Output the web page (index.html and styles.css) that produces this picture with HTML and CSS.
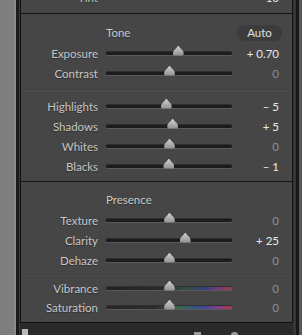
FILE: index.html
```html
<!DOCTYPE html>
<html lang="en">
<head>
    <meta charset="UTF-8">
    <meta name="viewport" content="width=device-width, initial-scale=1.0">
    <title>Basic - Tone / Presence</title>
    <link rel="stylesheet" href="styles.css">
</head>
<body>

<div class="app">
    <div class="left-strip"></div>
    <div class="column">
        <div class="frame">
            <div class="panel">
                <div class="panel-inner">

                    <div class="section top">
                        <div class="row">
                            <span class="label">Tint</span>
                            <div class="track"><div class="thumb" style="left: 46.7%"></div></div>
                            <span class="value">– 10</span>
                        </div>
                    </div>

                    <div class="section tone">
                        <div class="row head">
                            <span class="label"></span>
                            <span class="title">Tone</span>
                            <span class="auto">Auto</span>
                        </div>
                        <div class="row">
                            <span class="label">Exposure</span>
                            <div class="track"><div class="thumb" style="left: 57%"></div></div>
                            <span class="value">+ 0.70</span>
                        </div>
                        <div class="row">
                            <span class="label">Contrast</span>
                            <div class="track"><div class="thumb" style="left: 50%"></div></div>
                            <span class="value zero">0</span>
                        </div>
                        <div class="divider"></div>
                        <div class="row">
                            <span class="label">Highlights</span>
                            <div class="track"><div class="thumb" style="left: 47.5%"></div></div>
                            <span class="value">– 5</span>
                        </div>
                        <div class="row">
                            <span class="label">Shadows</span>
                            <div class="track"><div class="thumb" style="left: 52.5%"></div></div>
                            <span class="value">+ 5</span>
                        </div>
                        <div class="row">
                            <span class="label">Whites</span>
                            <div class="track"><div class="thumb" style="left: 50%"></div></div>
                            <span class="value zero">0</span>
                        </div>
                        <div class="row">
                            <span class="label">Blacks</span>
                            <div class="track"><div class="thumb" style="left: 49.5%"></div></div>
                            <span class="value">– 1</span>
                        </div>
                    </div>

                    <div class="section presence">
                        <div class="row head">
                            <span class="label"></span>
                            <span class="title">Presence</span>
                            <span></span>
                        </div>
                        <div class="row">
                            <span class="label">Texture</span>
                            <div class="track"><div class="thumb" style="left: 50%"></div></div>
                            <span class="value zero">0</span>
                        </div>
                        <div class="row">
                            <span class="label">Clarity</span>
                            <div class="track"><div class="thumb" style="left: 62.5%"></div></div>
                            <span class="value">+ 25</span>
                        </div>
                        <div class="row">
                            <span class="label">Dehaze</span>
                            <div class="track"><div class="thumb" style="left: 50%"></div></div>
                            <span class="value zero">0</span>
                        </div>
                        <div class="divider small"></div>
                        <div class="row">
                            <span class="label">Vibrance</span>
                            <div class="track color"><div class="thumb" style="left: 50%"></div></div>
                            <span class="value zero">0</span>
                        </div>
                        <div class="row tight">
                            <span class="label">Saturation</span>
                            <div class="track color sat"><div class="thumb" style="left: 50%"></div></div>
                            <span class="value zero">0</span>
                        </div>
                    </div>

                </div>
            </div>
            <div class="footer">
                <span class="square"></span>
                <span class="mark one"></span>
                <span class="mark two"></span>
            </div>
        </div>
    </div>
    <div class="right-strip"></div>
</div>

</body>
</html>
```

FILE: styles.css
```css
body {
    margin: 0;
    background-color: #2b2b2b;
    font-family: Lato, "Open Sans", sans-serif;
    font-size: 11.5px;
}
.app {
    display: flex;
    height: 335px;
    overflow: hidden;
}
.left-strip {
    width: 14px;
    background-color: #7e7e7e;
    border-right: 2px solid #8b8b8b;
}
.column {
    width: 274px;
    border-left: 3px solid #1b1b1b;
    border-right: 3px solid #181818;
    background-color: #363636;
    padding-right: 3px;
}
.frame {
    display: flex;
    flex-direction: column;
    height: 100%;
    border-left: 1px solid #3a3a3a;
}
.panel {
    height: 322px;
    background-color: #464646;
    border-left: 1px solid #111;
    border-right: 1px solid #111;
    border-bottom: 1px solid #111;
    overflow: hidden;
}
.panel-inner {
    margin-top: -13px;
}
.section.top {
    padding-bottom: 6px;
    border-bottom: 1px solid #141414;
}
.section.tone {
    padding-top: 8px;
    padding-bottom: 5px;
    border-bottom: 1px solid #161616;
}
.section.presence {
    padding-top: 7px;
}
.row {
    display: grid;
    grid-template-columns: 85px 126px 1fr;
    align-items: center;
    height: 20px;
    padding-right: 13px;
}
.row.head {
    height: 21px;
}
.row.tight {
    height: 18px;
}
.label {
    text-align: right;
    padding-right: 8px;
    color: #c6c6c6;
    text-shadow: 0 1px 1px rgba(0, 0, 0, 0.35);
}
.title {
    color: #cacaca;
    text-shadow: 0 1px 1px rgba(0, 0, 0, 0.35);
}
.auto {
    justify-self: end;
    margin-right: -3px;
    width: 45px;
    height: 16px;
    line-height: 16px;
    text-align: center;
    border-radius: 8px;
    background-color: #3c3c3c;
    color: #e0e0e0;
}
.value {
    text-align: right;
    color: #e8e8e8;
}
.value.zero {
    color: #8e8e8e;
}
.track {
    position: relative;
    height: 3px;
    border-radius: 2px;
    background-color: #1c1c1c;
    box-shadow: 0 1px 0 #5a5a5a, 0 -1px 0 #2e2e2e;
}
.track.color {
    background: linear-gradient(to right, #222 0%, #2a2a2a 45%, #345040 62%, #34407a 78%, #7a3a78 90%, #a03a4a 100%);
}
.track.sat {
    background: linear-gradient(to right, #262626 0%, #2d2d2d 40%, #3a6a4a 58%, #3a4a9a 76%, #8a3a8a 90%, #b03a48 100%);
}
.thumb {
    position: absolute;
    top: -6px;
    width: 11px;
    height: 10px;
    margin-left: -5px;
    background: linear-gradient(#d0d0d0, #8f8f8f);
    clip-path: polygon(50% 0, 68% 25%, 92% 52%, 100% 78%, 94% 100%, 6% 100%, 0 78%, 8% 52%, 32% 25%);
}
.divider {
    height: 1px;
    margin: 6px 0 6px 0;
    background-color: #3e3e3e;
    box-shadow: 0 1px 0 #4d4d4d;
}
.divider.small {
    margin: 4px 0 3px 0;
}
.footer {
    flex: 1;
    position: relative;
    background-color: #2a2a2a;
}
.square {
    position: absolute;
    left: 2px;
    top: 6px;
    width: 6px;
    height: 8px;
    background-color: #b8b8b8;
}
.mark {
    position: absolute;
    top: 9px;
    width: 7px;
    height: 4px;
    background-color: #9a9a9a;
}
.mark.one {
    left: 174px;
}
.mark.two {
    left: 211px;
    border-radius: 3px 3px 0 0;
}
.right-strip {
    flex: 1;
    background-color: #585858;
}
```
